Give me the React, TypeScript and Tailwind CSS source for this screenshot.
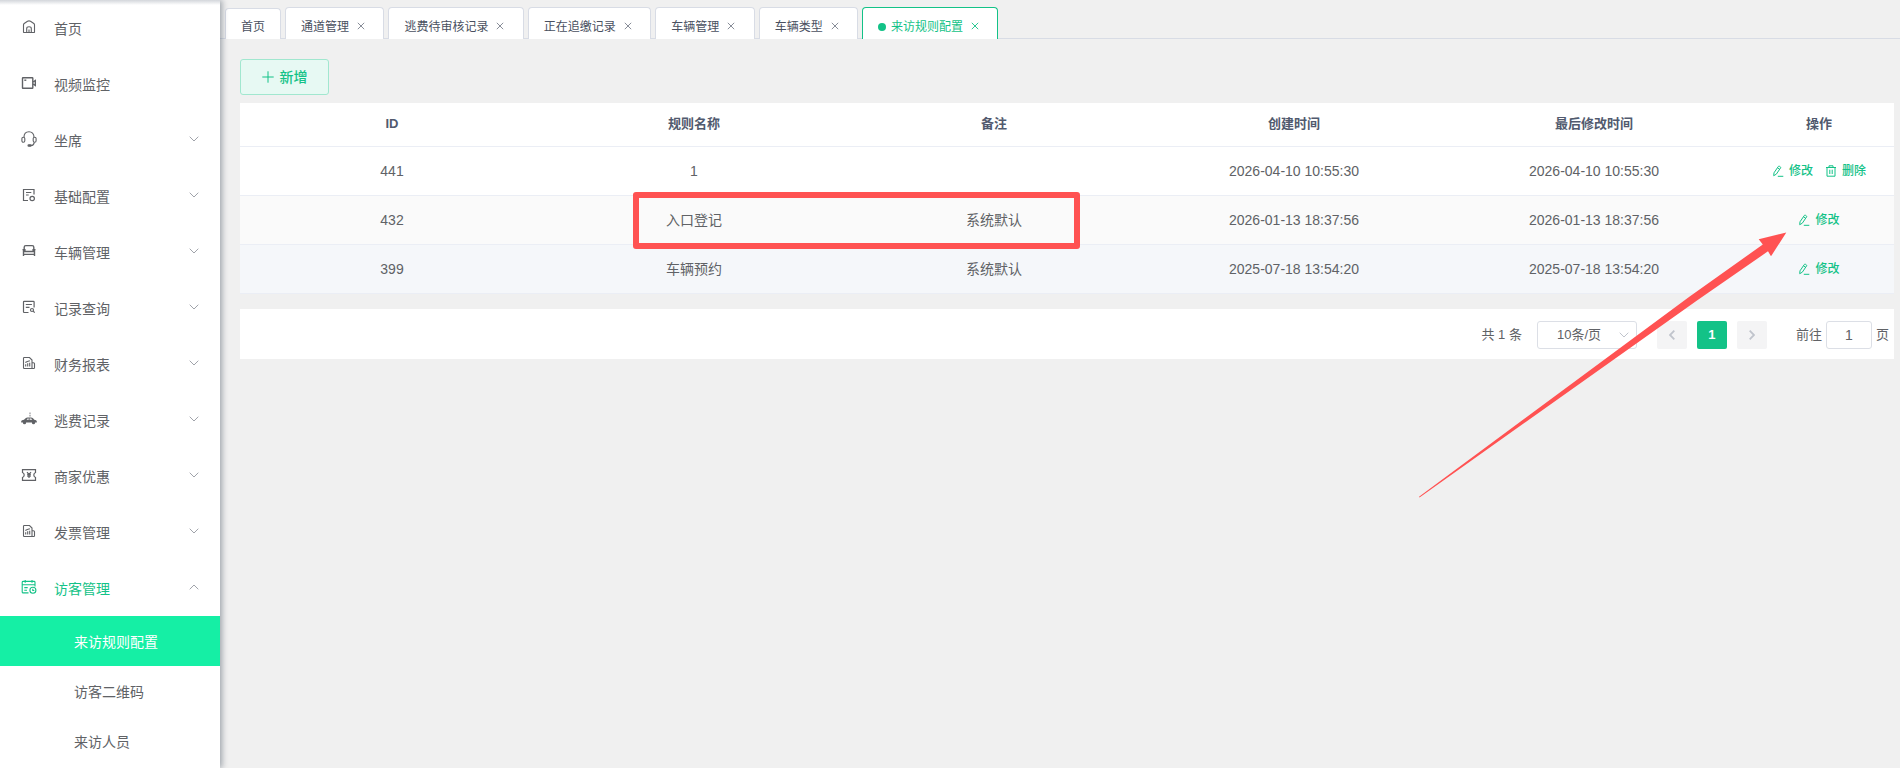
import React from "react";

type IconProps = { className?: string };

const svgProps = {
  viewBox: "0 0 16 16",
  fill: "none",
  stroke: "currentColor",
  strokeWidth: 1.1,
};

const HomeIcon = ({ className }: IconProps) => (
  <svg {...svgProps} className={className}>
    <path d="M2.500 13.300V5.800Q2.500 5 3.200 4.500L6.500 2.200Q8 1.500 9.500 2.200L12.800 4.500Q13.500 5 13.500 5.800V13.300Q13.500 13.500 13.300 13.500H2.700Q2.500 13.500 2.500 13.300Z" />
    <path d="M5.700 13.500V9.500Q5.700 7.700 8 7.700T10.300 9.500V13.500M8 10.500V13.500" />
  </svg>
);

const VideoIcon = ({ className }: IconProps) => (
  <svg {...svgProps} strokeWidth={1.4} className={className}>
    <rect x="1.500" y="2.700" width="10.300" height="10.600" rx="0.500" />
    <path d="M3.300 5.200H5.300" />
    <path d="M12 7L14.300 5.500V10.500L12 9" />
  </svg>
);

const HeadsetIcon = ({ className }: IconProps) => (
  <svg {...svgProps} className={className}>
    <path d="M3 6.300C3 2.500 5.200 0.700 8 0.700S13 2.500 13 6.300" />
    <rect x="0.900" y="6.200" width="2.900" height="5" rx="1.400" />
    <rect x="12.200" y="6.200" width="2.900" height="5" rx="1.400" />
    <path d="M13.300 11.300C13 13.300 12 14.400 10 14.500" />
    <rect x="7" y="13.700" width="3.200" height="1.600" rx="0.800" fill="currentColor" />
  </svg>
);

const SettingDocIcon = ({ className }: IconProps) => (
  <svg {...svgProps} strokeWidth={1.2} className={className}>
    <path d="M7 13.500H2.500V2.500H13V7.500" />
    <path d="M5 5.500H10.300M5 8H7.700" />
    <circle cx="11.200" cy="11.500" r="2.200" />
  </svg>
);

const CarIcon = ({ className }: IconProps) => (
  <svg {...svgProps} strokeWidth={1.4} className={className}>
    <path d="M3.200 6.500V4.200Q3.200 2.600 4.800 2.600H11.200Q12.800 2.600 12.800 4.200V6.500" />
    <path d="M1.500 6.600H3.900V8.500H12.100V6.600H14.500M2.500 6.800V13M13.500 6.800V13M2.500 11.400H13.500" />
  </svg>
);

const SearchDocIcon = ({ className }: IconProps) => (
  <svg {...svgProps} strokeWidth={1.2} className={className}>
    <path d="M7.500 13.500H3.200Q2.500 13.500 2.500 12.800V3Q2.500 2.300 3.200 2.300H12.400Q13.100 2.300 13.100 3V8.500" />
    <path d="M4.800 5.500H10.900M4.800 8.300H8.500" />
    <circle cx="11" cy="11" r="1.500" />
    <path d="M12.200 12.200L13.700 13.700" />
  </svg>
);

const ReportIcon = ({ className }: IconProps) => (
  <svg {...svgProps} className={className}>
    <path d="M11 13.500H3.200Q2.500 13.500 2.500 12.800V3.200Q2.500 2.500 3.200 2.500H8.500L11 5V13.500Z" />
    <path d="M11 7.700H12.500Q13.500 7.700 13.500 8.700V12.700Q13.500 13.500 12.700 13.500H11" />
    <path d="M4.700 11.500V9.200M6.700 11.500V8.200M8.700 11.500V7.700M4.300 7.500L6.300 6.400L8.900 5.800" />
  </svg>
);

const EscapeCarIcon = ({ className }: IconProps) => (
  <svg viewBox="0 0 16 16" fill="currentColor" className={className}>
    <path
      d="M0.200 11.600V10Q0.600 9 3 8.800L4.600 7.200Q5.300 6.500 6.500 6.500H10Q11.200 6.500 12 7.300L13.300 8.700Q15.600 9.100 15.800 10.300V11.600ZM5.600 8.700H7.700V7.400H6.600ZM8.600 8.700H11.300L10.200 7.400H8.600Z"
      fillRule="evenodd"
    />
    <circle cx="3.500" cy="11.700" r="1.600" />
    <circle cx="12.500" cy="11.700" r="1.600" />
    <path d="M8.600 1.400H9.400V3H8.600ZM8.600 3.800H9.400V5.600H8.600Z" />
  </svg>
);

const CouponIcon = ({ className }: IconProps) => (
  <svg {...svgProps} strokeWidth={1.2} className={className}>
    <path d="M1.500 2.600H14.500V5.500Q12.800 6.200 12.800 8T14.500 10.500V13.400H1.500V10.500Q3.200 9.800 3.200 8T1.500 5.500Z" />
    <path d="M6 5.200L8 7.500L10 5.200M8 7.500V11M6.200 7.700H9.800M6.200 9.200H9.800" />
  </svg>
);

const VisitorIcon = ({ className }: IconProps) => (
  <svg {...svgProps} className={className}>
    <path d="M7.500 13.900H2.200Q1.200 13.900 1.200 12.900V3.300Q1.200 2.400 2.200 2.400H13Q14 2.400 14 3.300V7.500M1.200 5.700H14M4.200 0.900V3.800M11 0.900V3.800M3.300 8.600H6.700M3.300 11.200H6" />
    <circle cx="11.900" cy="11.300" r="3" />
    <path d="M11.800 9.700V11.500H13.300" />
  </svg>
);

const ChevronIcon = ({ className }: IconProps) => (
  <svg viewBox="0 0 10 6" fill="none" stroke="currentColor" strokeWidth="1" className={className}>
    <path d="M0.700 0.700L5 5L9.300 0.700" />
  </svg>
);

const CloseIcon = () => (
  <svg viewBox="0 0 8 8" fill="none" stroke="currentColor" strokeWidth="0.9" className="w-2 h-2">
    <path d="M0.800 0.800L7.200 7.200M7.200 0.800L0.800 7.200" />
  </svg>
);

const EditIcon = () => (
  <svg viewBox="0 0 12 12" fill="none" stroke="currentColor" strokeWidth="1" className="w-3 h-3">
    <path d="M1.700 10.700L2 7.800L6.300 1.500Q6.800 0.900 7.500 1.300L8.300 1.800Q9 2.300 8.500 3L4.300 9.200L1.700 10.700ZM5.600 2.900L7.600 4.300M5.800 11.300H11.300" />
  </svg>
);

const TrashIcon = () => (
  <svg viewBox="0 0 12 12" fill="none" stroke="currentColor" strokeWidth="1" className="w-3 h-3">
    <path d="M1 2.500H11M4 2.500V0.800H8V2.500M2 2.500V11.200H10V2.500M4.800 4.700V9M7.200 4.700V9" />
  </svg>
);

const menus = [
  { name: "首页", Icon: HomeIcon, leaf: true },
  { name: "视频监控", Icon: VideoIcon, leaf: true },
  { name: "坐席", Icon: HeadsetIcon },
  { name: "基础配置", Icon: SettingDocIcon },
  { name: "车辆管理", Icon: CarIcon },
  { name: "记录查询", Icon: SearchDocIcon },
  { name: "财务报表", Icon: ReportIcon },
  { name: "逃费记录", Icon: EscapeCarIcon },
  { name: "商家优惠", Icon: CouponIcon },
  { name: "发票管理", Icon: ReportIcon },
];

const tabs = ["通道管理", "逃费待审核记录", "正在追缴记录", "车辆管理", "车辆类型"];

const rows = [
  { id: 441, name: "1", remark: "", created: "2026-04-10 10:55:30", updated: "2026-04-10 10:55:30", canDelete: true, bg: "bg-white" },
  { id: 432, name: "入口登记", remark: "系统默认", created: "2026-01-13 18:37:56", updated: "2026-01-13 18:37:56", canDelete: false, bg: "bg-[#fafafa]" },
  { id: 399, name: "车辆预约", remark: "系统默认", created: "2025-07-18 13:54:20", updated: "2025-07-18 13:54:20", canDelete: false, bg: "bg-[#f5f7fa]" },
];

const Sidebar = () => {
  return (
    <aside className="relative z-10 w-[220px] shrink-0 h-full bg-white text-sm text-[#606266] shadow-[2px_0_6px_rgba(0,21,41,0.35)]">
      <div className="absolute top-0 left-0 w-full h-[5px] bg-linear-to-b from-[#d3d6db] to-white" />
      <nav>
        {menus.map(({ name, Icon, leaf }) => (
          <a key={name} className="flex items-center h-14 pl-[21px] pr-[21px]">
            <Icon className="w-4 h-4 -mt-0.5" />
            <span className="ml-[17px] pt-0.5 flex-1">{name}</span>
            {!leaf && <ChevronIcon className="w-2.5 h-1.5 -mt-0.5 text-[#a0a3aa]" />}
          </a>
        ))}
        <a className="flex items-center h-14 pl-[21px] pr-[21px] text-[#13c287]">
          <VisitorIcon className="w-4 h-4 -mt-0.5" />
          <span className="ml-[17px] pt-0.5 flex-1">访客管理</span>
          <ChevronIcon className="w-2.5 h-1.5 -mt-0.5 rotate-180 text-[#a0a3aa]" />
        </a>
        <a className="flex items-center h-[50px] pl-[74px] pt-0.5 bg-[#15efa5] text-white">来访规则配置</a>
        <a className="flex items-center h-[50px] pl-[74px] pt-0.5">访客二维码</a>
        <a className="flex items-center h-[50px] pl-[74px] pt-0.5">来访人员</a>
      </nav>
    </aside>
  );
};

const TabBar = () => {
  return (
    <div className="flex items-end h-[39px] text-xs text-[#495060]">
      <div className="self-stretch w-[5px] border-b border-[#d8dce5]" />
      <div className="flex items-center h-[31px] px-[15px] pt-1.5 bg-white border border-b-0 border-[#d8dce5] rounded-t">
        首页
      </div>
      <div className="self-stretch w-1 border-b border-[#d8dce5]" />
      {tabs.map((tab) => (
        <React.Fragment key={tab}>
          <div className="flex items-center h-8 pl-[15px] pr-[14.4px] pt-[7px] bg-white border border-b-0 border-[#d8dce5] rounded-t">
            {tab}
            <span className="ml-2 mr-3 -mt-[3px] w-0 text-[#7b808c]">
              <CloseIcon />
            </span>
          </div>
          <div className="self-stretch w-1 border-b border-[#d8dce5]" />
        </React.Fragment>
      ))}
      <div className="flex items-center h-8 pl-[15px] pr-[14.4px] pt-[7px] bg-white border border-b-0 border-[#13c287] text-[#13c287] rounded-t">
        <span className="w-2 h-2 mr-[5px] rounded-full bg-[#13c287]" />
        来访规则配置
        <span className="ml-2 mr-3 -mt-[3px] w-0">
          <CloseIcon />
        </span>
      </div>
      <div className="self-stretch flex-1 border-b border-[#d8dce5]" />
    </div>
  );
};

const RuleTable = () => {
  return (
    <table className="w-full mt-2 table-fixed border-separate border-spacing-0 text-center text-sm text-[#606266]">
      <colgroup>
        <col className="w-[304px]" />
        <col className="w-[300px]" />
        <col className="w-[300px]" />
        <col className="w-[300px]" />
        <col className="w-[300px]" />
        <col className="w-[150px]" />
      </colgroup>
      <thead>
        <tr className="h-11 bg-white text-[13px] text-[#515a6e] [&>th]:border-b [&>th]:border-[#ebeef5] [&>th]:p-0 [&>th]:font-bold">
          <th>ID</th>
          <th>规则名称</th>
          <th>备注</th>
          <th>创建时间</th>
          <th>最后修改时间</th>
          <th>操作</th>
        </tr>
      </thead>
      <tbody>
        {rows.map((row) => (
          <tr key={row.id} className={`h-[49px] ${row.bg} [&>td]:border-b [&>td]:border-[#ebeef5] [&>td]:p-0`}>
            <td>{row.id}</td>
            <td>{row.name}</td>
            <td>{row.remark}</td>
            <td>{row.created}</td>
            <td>{row.updated}</td>
            <td>
              <div className="flex items-center justify-center gap-3 text-xs font-medium text-[#13c287]">
                <span className="flex items-center gap-[5px]">
                  <EditIcon />
                  修改
                </span>
                {row.canDelete && (
                  <span className="flex items-center gap-[5px]">
                    <TrashIcon />
                    删除
                  </span>
                )}
              </div>
            </td>
          </tr>
        ))}
      </tbody>
    </table>
  );
};

const Pagination = () => {
  return (
    <div className="flex items-center justify-end h-[50px] mt-[15px] pr-[5px] pb-px pt-[3px] bg-white text-[13px] text-[#606266]">
      <span className="mr-[15px]">共 1 条</span>
      <div className="flex items-center justify-between w-[100px] h-7 mr-5 pl-[19px] pr-[7px] border border-[#dcdfe6] rounded-[3px]">
        10条/页
        <ChevronIcon className="w-2.5 h-1.5 text-[#c0c4cc]" />
      </div>
      <div className="flex gap-2.5">
        <button className="flex items-center justify-center w-[30px] h-7 bg-[#f4f4f5] rounded-xs text-[#c0c4cc]">
          <svg viewBox="0 0 6 10" fill="none" stroke="currentColor" strokeWidth="1.8" className="w-1.5 h-2.5">
            <path d="M5.300 0.700L1 5L5.300 9.300" />
          </svg>
        </button>
        <button className="w-[30px] h-7 bg-[#13c287] rounded-xs font-bold text-white">1</button>
        <button className="flex items-center justify-center w-[30px] h-7 bg-[#f4f4f5] rounded-xs text-[#c0c4cc]">
          <svg viewBox="0 0 6 10" fill="none" stroke="currentColor" strokeWidth="1.8" className="w-1.5 h-2.5">
            <path d="M0.700 0.700L5 5L0.700 9.300" />
          </svg>
        </button>
      </div>
      <span className="ml-[29px]">前往</span>
      <span className="flex items-center justify-center w-[46px] h-7 mx-1 border border-[#dcdfe6] rounded-[3px] text-sm">1</span>
      <span>页</span>
    </div>
  );
};

const App = () => {
  return (
    <div className="relative flex w-[1900px] h-[768px] overflow-hidden bg-[#f0f0f0] font-['Liberation_Sans','Noto_Sans_CJK_SC',sans-serif]">
      <Sidebar />
      <main className="flex-1 min-w-0">
        <TabBar />
        <div className="pt-5 pl-5 pr-1.5">
          <button className="flex items-center justify-center gap-1.5 w-[89px] h-9 bg-[#e7f9f3] border border-[#a1e7cf] rounded-[3px] text-sm font-medium text-[#13c287]">
            <svg viewBox="0 0 12 12" stroke="currentColor" strokeWidth="1" className="w-3 h-3">
              <path d="M6 0.300V11.700M0.300 6H11.700" />
            </svg>
            新增
          </button>
          <RuleTable />
          <Pagination />
        </div>
      </main>

      {/* annotations */}
      <div className="absolute z-20 left-[633px] top-[192px] w-[447px] h-[57px] border-6 border-[#ff5252] rounded-[3px]" />
      <svg viewBox="0 0 370 266" className="absolute z-20 left-[1418px] top-[232px] w-[370px] h-[266px]" fill="#ff5252">
        <path d="M368.300 0.500L340.700 7.300L344.800 12.500L271 65L1 264.800L1.500 265.400L279 68.500L350 19.300L353 24.300Z" />
      </svg>
    </div>
  );
};

export default App;
